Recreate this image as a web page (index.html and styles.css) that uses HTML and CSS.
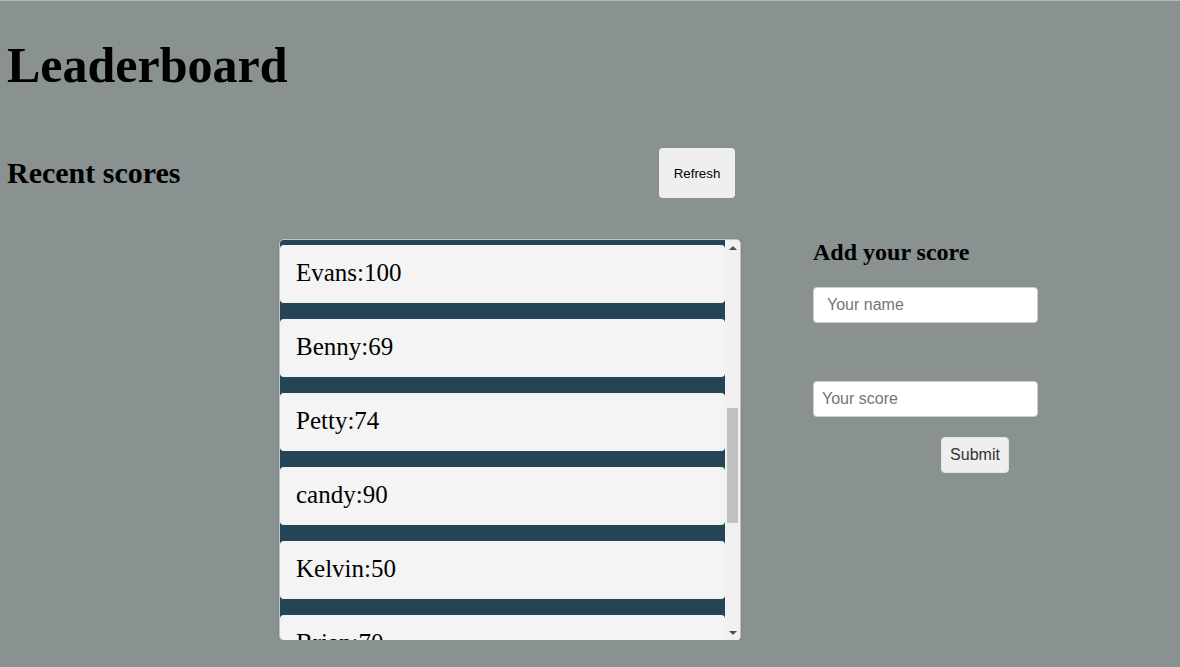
FILE: index.html
```html
<!DOCTYPE html>
<html lang="en">
<head>
<meta charset="utf-8">
<title>Leaderboard</title>
<link rel="stylesheet" href="styles.css">
</head>
<body>
<h1 class="title">Leaderboard</h1>
<div class="scores-head">
  <h2 class="section-title">Recent scores</h2>
  <button class="refresh-btn" type="button">Refresh</button>
</div>
<div class="main">
  <div class="list-box">
    <ul class="score-list" id="scoreList">
      <li class="score-item">Alice:88</li>
      <li class="score-item">John:45</li>
      <li class="score-item">Mary:77</li>
      <li class="score-item">Peter:60</li>
      <li class="score-item">Grace:95</li>
      <li class="score-item">Sam:33</li>
      <li class="score-item">Linda:81</li>
      <li class="score-item">Evans:100</li>
      <li class="score-item">Benny:69</li>
      <li class="score-item">Petty:74</li>
      <li class="score-item">candy:90</li>
      <li class="score-item">Kelvin:50</li>
      <li class="score-item">Brian:70</li>
      <li class="score-item">Tony:58</li>
      <li class="score-item">Ruth:66</li>
      <li class="score-item">Moses:42</li>
      <li class="score-item">Zara:85</li>
    </ul>
    <div class="scrollbar" aria-hidden="true">
      <div class="sb-btn sb-up"></div>
      <div class="sb-track"><div class="sb-thumb"></div></div>
      <div class="sb-btn sb-down"></div>
    </div>
  </div>
  <form class="score-form">
    <h2 class="form-title">Add your score</h2>
    <input class="field field-name" type="text" placeholder="Your name">
    <input class="field field-score" type="text" placeholder="Your score">
    <button class="submit-btn" type="button">Submit</button>
  </form>
</div>
<script src="script.js"></script>
</body>
</html>
```
FILE: styles.css
```css
html {
  border-top: 1px solid #b3b8b7;
  background: #899290;
}
body {
  margin: 0;
  padding: 0 8px;
  background: #899290;
  font-family: "Liberation Serif", "Times New Roman", serif;
  color: #000;
}
.title {
  margin: 35px 0 0;
  font-size: 50px;
  line-height: 58px;
  font-weight: bold;
  position: relative;
  left: -1px;
}
.scores-head {
  margin-top: 54px;
  width: 727px;
  display: flex;
  justify-content: space-between;
  align-items: center;
}
.section-title {
  margin: 0;
  font-size: 30px;
  line-height: 34px;
  font-weight: bold;
  position: relative;
  left: -1px;
}
.refresh-btn {
  width: 76px;
  height: 50px;
  padding: 0;
  border: none;
  border-radius: 4px;
  background: #efefef;
  font-family: "Liberation Sans", Arial, sans-serif;
  font-size: 13.33px;
  color: #000;
}
.main {
  margin-top: 42px;
  padding-left: 272px;
  display: flex;
  align-items: flex-start;
  gap: 73px;
}
.list-box {
  width: 460px;
  height: 400px;
  display: flex;
  overflow: hidden;
  border-radius: 4px;
  background: #f1f1f1;
  box-shadow: 0 0 0 1px rgba(220, 222, 222, 0.7), 0 1px 3px rgba(0, 0, 0, 0.3);
}
.score-list {
  list-style: none;
  margin: 0;
  padding: 0;
  flex: 1;
  height: 100%;
  overflow: hidden;
  background: #234555;
}
.score-item {
  height: 58px;
  box-sizing: border-box;
  padding: 13px 16px 15px;
  margin-bottom: 16px;
  background: #f4f4f4;
  border-radius: 4px;
  font-size: 25px;
  line-height: 30px;
}
.scrollbar {
  width: 15px;
  display: flex;
  flex-direction: column;
  background: #f1f1f1;
}
.sb-btn {
  height: 15px;
  flex: none;
  display: flex;
  justify-content: center;
  align-items: center;
}
.sb-up::before {
  content: "";
  border-left: 4px solid transparent;
  border-right: 4px solid transparent;
  border-bottom: 4px solid #505050;
}
.sb-down::before {
  content: "";
  border-left: 4px solid transparent;
  border-right: 4px solid transparent;
  border-top: 4px solid #505050;
}
.sb-track {
  flex: 1;
  padding: 0 2px;
}
.sb-thumb {
  margin-top: 153px;
  height: 115px;
  background: #c1c1c1;
}
.score-form {
  display: flex;
  flex-direction: column;
  align-items: flex-start;
}
.form-title {
  margin: 0;
  font-size: 24px;
  line-height: 26px;
  font-weight: bold;
  position: relative;
  top: -1px;
}
.field {
  width: 225px;
  height: 36px;
  box-sizing: border-box;
  border: 1px solid #d0d0d0;
  border-radius: 4px;
  background: #fff;
  font-family: "Liberation Sans", Arial, sans-serif;
  font-size: 16px;
  color: #333;
}
.field::placeholder {
  color: #757575;
}
.field-name {
  margin-top: 21px;
  padding: 0 13px;
}
.field-score {
  margin-top: 58px;
  padding: 0 8px;
}
.submit-btn {
  margin-top: 20px;
  margin-left: 128px;
  width: 68px;
  height: 36px;
  padding: 0;
  border: 1px solid #e2e2e2;
  border-radius: 4px;
  background: #efefef;
  font-family: "Liberation Sans", Arial, sans-serif;
  font-size: 16px;
  color: #333;
}
```
FILE: script.js
```js
document.getElementById('scoreList').scrollTop = 513;
```
